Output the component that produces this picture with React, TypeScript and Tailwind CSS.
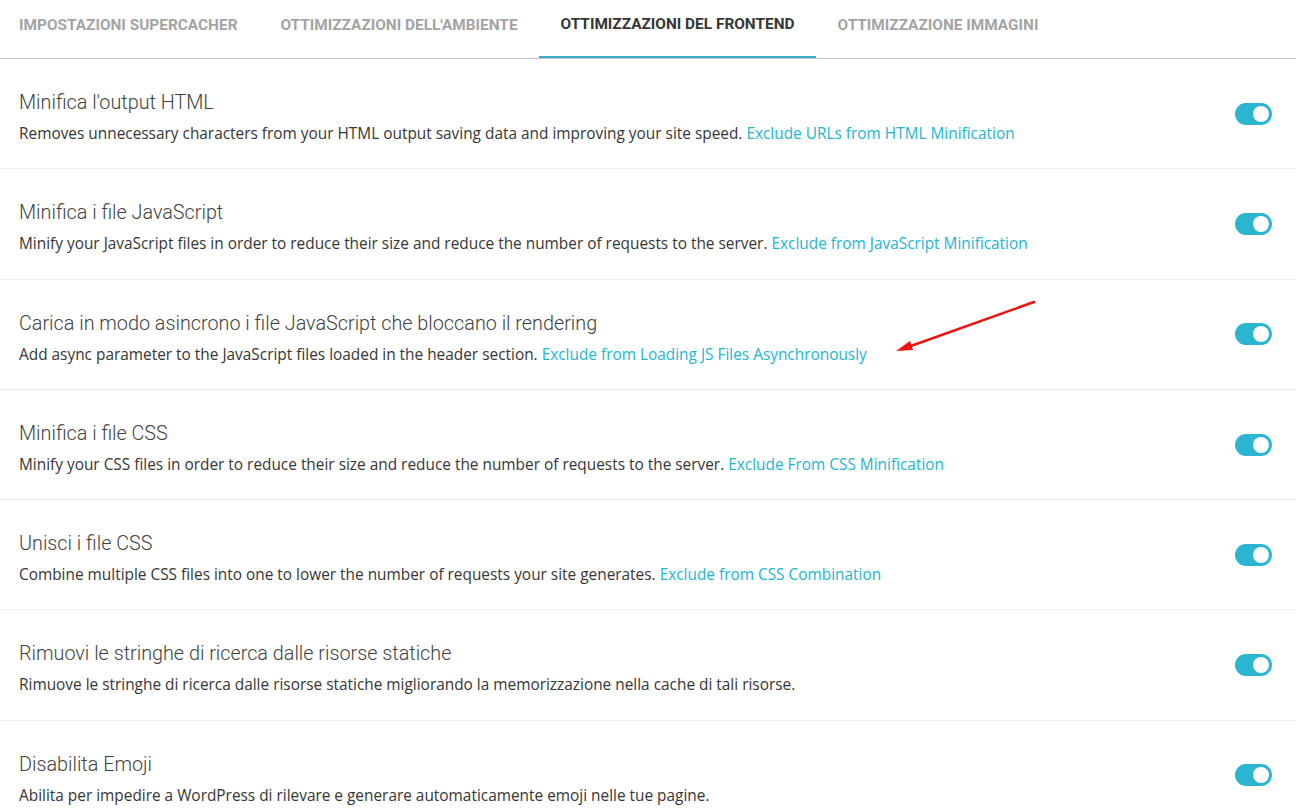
const tabs = [
  { label: "Impostazioni SuperCacher", active: false },
  { label: "Ottimizzazioni dell'ambiente", active: false },
  { label: "Ottimizzazioni del frontend", active: true },
  { label: "Ottimizzazione immagini", active: false },
];

const rows = [
  {
    title: "Minifica l'output HTML",
    desc: "Removes unnecessary characters from your HTML output saving data and improving your site speed.",
    link: "Exclude URLs from HTML Minification",
  },
  {
    title: "Minifica i file JavaScript",
    desc: "Minify your JavaScript files in order to reduce their size and reduce the number of requests to the server.",
    link: "Exclude from JavaScript Minification",
  },
  {
    title: "Carica in modo asincrono i file JavaScript che bloccano il rendering",
    desc: "Add async parameter to the JavaScript files loaded in the header section.",
    link: "Exclude from Loading JS Files Asynchronously",
  },
  {
    title: "Minifica i file CSS",
    desc: "Minify your CSS files in order to reduce their size and reduce the number of requests to the server.",
    link: "Exclude From CSS Minification",
  },
  {
    title: "Unisci i file CSS",
    desc: "Combine multiple CSS files into one to lower the number of requests your site generates.",
    link: "Exclude from CSS Combination",
  },
  {
    title: "Rimuovi le stringhe di ricerca dalle risorse statiche",
    desc: "Rimuove le stringhe di ricerca dalle risorse statiche migliorando la memorizzazione nella cache di tali risorse.",
    link: "",
  },
  {
    title: "Disabilita Emoji",
    desc: "Abilita per impedire a WordPress di rilevare e generare automaticamente emoji nelle tue pagine.",
    link: "",
  },
];

function Toggle() {
  return (
    <div className="flex h-[22px] w-[37px] items-center justify-end rounded-full bg-[#2bb5d0] pr-[3px]">
      <div className="h-[16px] w-[16px] rounded-full bg-white" />
    </div>
  );
}

export default function App() {
  return (
    <div className="relative h-[812px] w-[1296px] overflow-hidden bg-white">
      <div className="flex h-[59px] border-b border-[#c4c4c4]">
        <div className="ml-[-3px] flex">
          {tabs.map((t) => (
            <div
              key={t.label}
              className={`flex h-[58px] items-center pl-[22px] pr-[21px] pb-[6px] text-[15.4px] font-bold uppercase ${
                t.active ? "border-b-2 border-[#3aaecb] text-[#363636]" : "text-[#a3a3a3]"
              }`}
              style={{ fontFamily: "Roboto, sans-serif" }}
            >
              {t.label}
            </div>
          ))}
        </div>
      </div>

      {rows.map((r) => (
        <div key={r.title} className="flex items-center border-b border-[#ebebeb] pl-[19px] pr-[24px]">
          <div className="flex-1 pt-[32px] pb-[24.3px]">
            <div
              className="text-[19.8px] font-light leading-[24px] text-[#3f3f3f]"
              style={{ fontFamily: "Roboto, sans-serif" }}
            >
              {r.title}
            </div>
            <div
              className="mt-[8px] text-[15.4px] leading-[21px] text-[#363636]"
              style={{ fontFamily: "'Open Sans', sans-serif" }}
            >
              {r.desc}
              {r.link && (
                <>
                  {" "}
                  <span className="text-[#22b6d2]">{r.link}</span>
                </>
              )}
            </div>
          </div>
          <Toggle />
        </div>
      ))}

      <svg className="absolute left-0 top-0" width="1296" height="812">
        <line x1="1034" y1="302" x2="908" y2="347" stroke="#f01010" strokeWidth="2.5" strokeLinecap="round" />
        <polygon points="896,351 910,341 913,350" fill="#f01010" />
      </svg>
    </div>
  );
}
